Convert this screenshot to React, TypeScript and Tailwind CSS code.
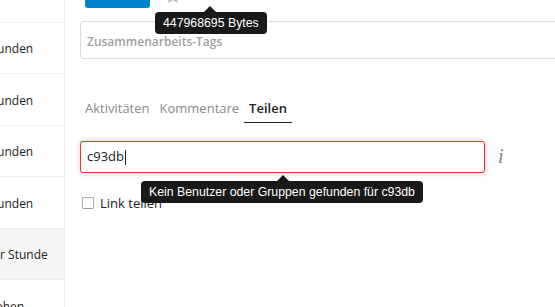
import React from "react";

const sideRows = [
  { text: "vor 3 Stunden", h: "h-[51px]", active: false },
  { text: "vor 3 Stunden", h: "h-[52px]", active: false },
  { text: "vor 3 Stunden", h: "h-[51px]", active: false },
  { text: "vor 3 Stunden", h: "h-[52px]", active: false },
  { text: "vor einer Stunde", h: "h-[51px]", active: true },
  { text: "Nie gesehen", h: "h-[52px]", active: false },
];

function Tooltip({ text, arrowLeft }: { text: string; arrowLeft: string }) {
  return (
    <div className="relative">
      <div
        className={`absolute top-[-6px] ${arrowLeft} h-0 w-0 border-x-[6px] border-b-[6px] border-x-transparent border-b-[#191919]`}
      />
      <div className="whitespace-nowrap rounded-[4px] bg-[#191919] px-[8px] text-[12.3px] leading-[22px] text-white [font-family:'Liberation_Sans',Arial,sans-serif]">
        {text}
      </div>
    </div>
  );
}

export default function App() {
  return (
    <div className="flex h-[307px] w-[555px] overflow-hidden bg-white text-[#222] [font-family:'Open_Sans',sans-serif]">
      {/* Sidebar */}
      <div className="flex w-[65px] shrink-0 flex-col overflow-hidden border-r border-[#ededed]">
        <div className="h-[23px] shrink-0 border-b border-[#ededed]" />
        {sideRows.map((r, i) => (
          <div
            key={i}
            className={`flex ${r.h} shrink-0 items-center overflow-hidden whitespace-nowrap border-b border-[#ededed] pt-[2px] text-[12px] ${
              r.active ? "bg-[#f5f5f5]" : "bg-white"
            }`}
          >
            <span className="ml-[-45px]">{r.text}</span>
          </div>
        ))}
      </div>

      {/* Main */}
      <div className="relative flex min-w-0 flex-1 flex-col">
        {/* top action row */}
        <div className="flex h-[8px] items-start">
          <div className="ml-[20px] h-[8px] w-[65px] rounded-b-[3px] bg-[#0082c9]" />
          <svg
            className="ml-[15px] mt-[-12px]"
            width="16"
            height="16"
            viewBox="0 0 16 16"
            fill="none"
            stroke="#b3b3b3"
            strokeWidth="1.2"
          >
            <path d="M8 1.5l1.9 4.1 4.4.5-3.3 3 .9 4.4L8 11.3 4.1 13.5 5 9.1 1.7 6.1l4.4-.5z" />
          </svg>
        </div>

        {/* tooltip over bytes */}
        <div className="absolute left-[90px] top-[12px] z-10">
          <Tooltip text="447968695 Bytes" arrowLeft="left-[49px]" />
        </div>

        {/* collaborative tags */}
        <div className="ml-[15px] mt-[13px] flex h-[38px] w-[480px] shrink-0 items-center rounded-[3px] border border-[#dbdbdb] pl-[6px] pt-[3px]">
          <span className="text-[12px] font-semibold text-[#a0a0a0]">Zusammenarbeits-Tags</span>
        </div>

        {/* tabs */}
        <div className="ml-[15px] mt-[41px] flex text-[13px] leading-[17px]">
          <div className="px-[5px] pb-[5px] text-[#8a8a8a]">Aktivitäten</div>
          <div className="px-[5px] pb-[5px] text-[#8a8a8a]">Kommentare</div>
          <div className="border-b border-[#222] px-[5px] pb-[5px] font-semibold text-[#222]">Teilen</div>
        </div>

        {/* share input */}
        <div className="ml-[15px] mt-[18px] flex items-center">
          <div className="flex h-[32px] w-[405px] items-center rounded-[3px] border border-[#e9322d] pl-[6px] text-[13px] text-[#222] shadow-[0_0_5px_rgba(233,50,45,0.35)]">
            <span>c93db</span>
            <span className="ml-[1px] h-[15px] w-px bg-[#222]" />
          </div>
          <span className="ml-[13px] mt-[-2px] text-[20px] italic text-[#888] [font-family:'Liberation_Serif',serif]">i</span>
        </div>

        {/* tooltip under input */}
        <div className="absolute left-[76px] top-[181px] z-10">
          <Tooltip text="Kein Benutzer oder Gruppen gefunden für c93db" arrowLeft="left-[136px]" />
        </div>

        {/* link share */}
        <div className="ml-[17px] mt-[23px] flex items-center">
          <span className="h-[12px] w-[12px] rounded-[1px] border border-[#a8a8a8]" />
          <span className="ml-[6px] text-[13px] leading-[14px] text-[#222]">Link teilen</span>
        </div>
      </div>
    </div>
  );
}
